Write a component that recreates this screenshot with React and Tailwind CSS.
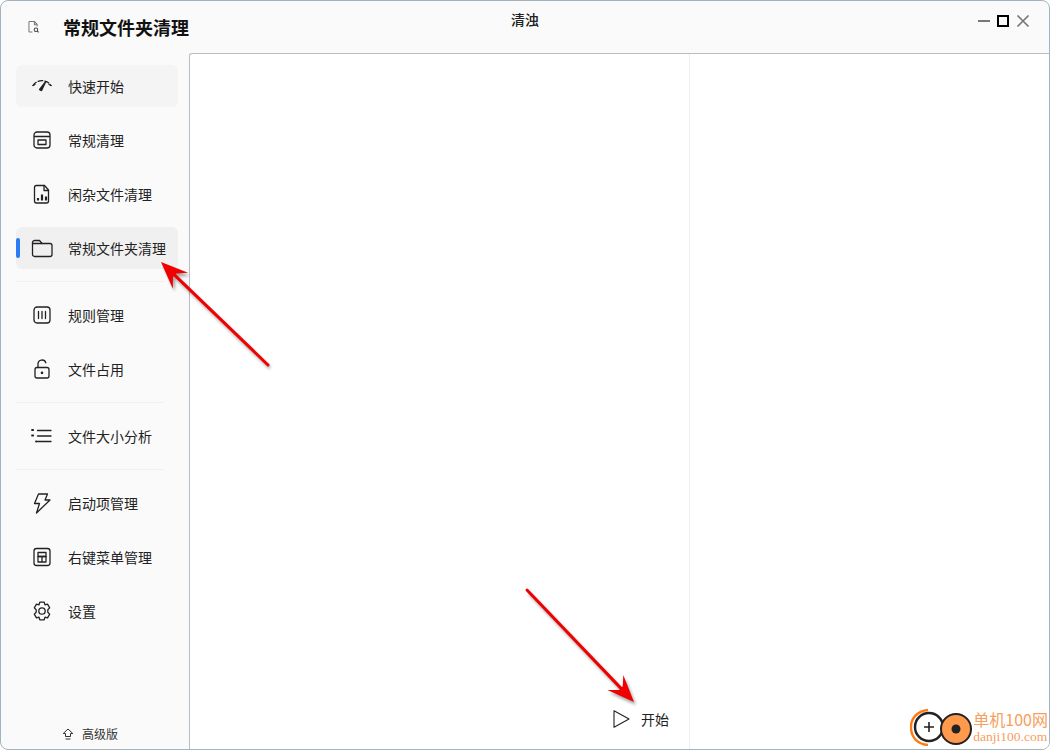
const Ico = ({ children, className = 'w-6 h-6' }) => (
  <svg className={className} viewBox="0 0 24 24" fill="none" stroke="#222" strokeWidth={1.3} strokeLinecap="round" strokeLinejoin="round">
    {children}
  </svg>
);

const icons = {
  gauge: (
    <Ico>
      <path d="M3 11.5C5 8.5 8 6.8 12 6.6c4 .2 7 1.9 9 4.9" strokeDasharray="4.5 2.2" />
      <path d="M3 11.5l2-1M21 11.5l-2-1" />
      <path d="M15.5 8l-4 8.5-1.8-1z" fill="#222" strokeWidth={1.5} />
    </Ico>
  ),
  normal: (
    <Ico>
      <rect x="4" y="4" width="16" height="16" rx="3" />
      <path d="M4.5 8.5h15" />
      <rect x="8" y="12" width="8" height="4.5" />
    </Ico>
  ),
  file: (
    <Ico>
      <path d="M6.5 3.5h8l4 4.5v11a2 2 0 0 1-2 2h-10a2 2 0 0 1-2-2v-13.500a2 2 0 0 1 2-2z" />
      <path d="M14 3.500v5h4.500" />
      <path d="M8 18.500v-2.500M12 18.500v-6M16 18.500v-4" strokeWidth={2.2} strokeLinecap="butt" />
    </Ico>
  ),
  folder: (
    <Ico>
      <path d="M2.500 6.500a2 2 0 0 1 2-2h5l2.500 3h8a2 2 0 0 1 2 2v9a2 2 0 0 1-2 2h-15.500a2 2 0 0 1-2-2z" />
      <path d="M12 7.500h-9.500" />
    </Ico>
  ),
  rule: (
    <Ico>
      <rect x="4" y="4" width="16" height="16" rx="3" />
      <path d="M8.500 8.500v7M12 8.500v7M15.500 8.500v7" />
    </Ico>
  ),
  lock: (
    <Ico>
      <rect x="5" y="10.500" width="14" height="10.500" rx="2" />
      <path d="M8 10.500V7a4 4 0 0 1 7.800-1.200" />
      <circle cx="12" cy="15.800" r="0.700" fill="#222" />
    </Ico>
  ),
  list: (
    <Ico>
      <path d="M7.500 6.500h13.500M7.500 12h13.500M7.500 17.500h13.500" />
      <path d="M2 6h1.200M2 11.500h1.200M6 17.500h.4" strokeWidth={1.8} />
    </Ico>
  ),
  bolt: (
    <Ico>
      <path d="M8.500 3h9l-2.500 6h5l-13.500 13 3-9.500h-5z" />
    </Ico>
  ),
  menu: (
    <Ico>
      <rect x="4" y="3.500" width="16" height="17" rx="2.500" />
      <rect x="8" y="7.500" width="8" height="4" />
      <path d="M8 11.500h8v5.500h-8zM12 11.500v5.500" />
    </Ico>
  ),
  gear: (
    <Ico>
      <path d="M9.800 3.200h4.400l.8 2.600 2.500-.7 2.200 3.800-1.900 1.900 0 2.400 1.900 1.900-2.200 3.800-2.500-.7-.8 2.600h-4.400l-.8-2.600-2.500.7-2.200-3.800 1.900-1.900v-2.400l-1.900-1.900 2.200-3.800 2.500.7z" />
      <circle cx="12" cy="12" r="3.200" />
    </Ico>
  ),
};

const NavItem = ({ icon, label, hover, active }) => (
  <div className={`relative h-[42px] w-[162px] flex items-center rounded-md pl-[14px] ${active ? 'bg-[#f0f0f0]' : hover ? 'bg-[#f4f4f4]' : ''}`}>
    {active && <div className="absolute left-0 top-[11px] w-1 h-5 rounded bg-[#2f7bf6]" />}
    {icons[icon]}
    <span className="ml-[14px] text-[14px] text-[#222] leading-none whitespace-nowrap">{label}</span>
  </div>
);

const Divider = () => <div className="w-[148px] h-px bg-[#f0f0f0]" />;

const Arrow = ({ x1, y1, x2, y2 }) => {
  // shaft plus arrow head along the line from (x1,y1) to (x2,y2)
  const len = Math.hypot(x2 - x1, y2 - y1);
  const ux = (x2 - x1) / len;
  const uy = (y2 - y1) / len;
  const pt = (along, side) => `${x2 - ux * along - uy * side},${y2 - uy * along + ux * side}`;
  const head = [pt(0, 0), pt(27, -11), pt(19, -2.500), pt(19, 2.500), pt(27, 11)].join(' ');
  return (
    <g>
      <g transform="translate(2 3)" opacity="0.35" filter="url(#blur)">
        <line x1={x1} y1={y1} x2={x2 - ux * 15} y2={y2 - uy * 15} stroke="#000" strokeWidth="3" />
        <polygon points={head} fill="#000" />
      </g>
      <line x1={x1} y1={y1} x2={x2 - ux * 15} y2={y2 - uy * 15} stroke="#f00000" strokeWidth="3" strokeLinecap="round" />
      <polygon points={head} fill="#f00000" />
    </g>
  );
};

export default function App() {
  return (
    <div className="relative w-[1050px] h-[750px] bg-white overflow-hidden" style={{ fontFamily: '"Noto Sans CJK SC", "Noto Sans", sans-serif' }}>
      <div className="w-full h-full flex flex-col bg-[#fafafa] border border-[#a3b4c1] rounded-lg overflow-hidden">
        {/* Title bar */}
        <div className="h-[52px] flex shrink-0 relative">
          <div className="w-[188px] flex items-center pl-[26px]">
            <svg className="w-[18px] h-[18px]" viewBox="0 0 18 18" fill="none" stroke="#777" strokeWidth={1.3}>
              <path d="M7 15.500H3.500a1 1 0 0 1-1-1V3a1 1 0 0 1 1-1h6l3.500 3.500v3" />
              <path d="M9.500 2v4H13" />
              <circle cx="11.500" cy="12.500" r="2.300" stroke="#444" />
              <path d="M13.300 14.300l1.700 1.700" stroke="#444" />
            </svg>
            <span className="ml-[22px] text-[18px] font-bold text-[#111] leading-none whitespace-nowrap">常规文件夹清理</span>
          </div>
          <div className="flex-1 flex justify-center pt-[11px] pr-[188px]">
            <span className="text-[14px] font-medium text-[#222] leading-[14px] ml-[188px] -translate-x-[94px]">清浊</span>
          </div>
          <div className="absolute right-[19px] top-[13px] flex items-center gap-[7px]">
            <div className="w-3 h-[2px] bg-[#777]" />
            <div className="w-3 h-3 border-2 border-black bg-[#fafafa]" />
            <svg className="w-[14px] h-[14px]" viewBox="0 0 14 14" stroke="#777" strokeWidth={1.700}>
              <path d="M1.500 1.500l11 11M12.500 1.500l-11 11" />
            </svg>
          </div>
        </div>

        <div className="flex-1 flex min-h-0">
          {/* Sidebar */}
          <div className="w-[188px] shrink-0 flex flex-col pl-[15px] pt-3 pb-[7px]">
            <div className="flex flex-col gap-3">
              <NavItem icon="gauge" label="快速开始" hover />
              <NavItem icon="normal" label="常规清理" />
              <NavItem icon="file" label="闲杂文件清理" />
              <NavItem icon="folder" label="常规文件夹清理" active />
              <Divider />
              <NavItem icon="rule" label="规则管理" />
              <NavItem icon="lock" label="文件占用" />
              <Divider />
              <NavItem icon="list" label="文件大小分析" />
              <Divider />
              <NavItem icon="bolt" label="启动项管理" />
              <NavItem icon="menu" label="右键菜单管理" />
              <NavItem icon="gear" label="设置" />
            </div>
            <div className="mt-auto flex items-center pl-[46px] h-4">
              <svg className="w-3 h-3" viewBox="0 0 12 12" fill="none" stroke="#333" strokeWidth={1}>
                <path d="M6 1L1.200 5.500h2.300v3h5v-3h2.300zM3.500 11h5" />
              </svg>
              <span className="ml-2 text-[12px] text-[#333] leading-none">高级版</span>
            </div>
          </div>

          {/* Content */}
          <div className="flex-1 flex bg-white border-l border-t border-[#b3bec6] rounded-tl-[3px]">
            <div className="w-[500px] border-r border-[#eeeeee] relative flex items-end justify-end">
              <div className="flex items-center mb-[20px] mr-[20px]">
                <svg className="w-[20px] h-[20px]" viewBox="0 0 20 20" fill="none" stroke="#222" strokeWidth={1.100} strokeLinejoin="round">
                  <path d="M3 1.800l15 8.200-15 8.200z" />
                </svg>
                <span className="ml-[10px] text-[14px] text-[#222] leading-none">开始</span>
              </div>
            </div>
            <div className="flex-1" />
          </div>
        </div>
      </div>

      {/* Annotation arrows */}
      <svg className="absolute inset-0 pointer-events-none" width="1050" height="750">
        <defs>
          <filter id="blur"><feGaussianBlur stdDeviation="1.500" /></filter>
        </defs>
        <Arrow x1={268} y1={365} x2={161} y2={262} />
        <Arrow x1={527} y1={590} x2={634} y2={702} />
      </svg>

      {/* Watermark */}
      <div className="absolute right-[2px] bottom-[1px] flex items-center bg-white/0">
        <svg className="w-[64px] h-[44px]" viewBox="0 0 64 44" fill="none">
          <path d="M18 5C7 6 0 14 1 24c1 9 7 15 17 16" stroke="#ff7a14" strokeWidth="2.500" />
          <circle cx="19" cy="22" r="14" stroke="#222" strokeWidth="2.500" fill="#fff" />
          <path d="M14 22h10M19 17v10" stroke="#222" strokeWidth="1.600" />
          <circle cx="46" cy="24" r="15" fill="#ff9a4d" stroke="#222" strokeWidth="2" />
          <circle cx="46" cy="24" r="4.500" fill="#222" />
        </svg>
        <div className="flex flex-col items-start -ml-[1px]" style={{ fontFamily: '"Liberation Serif", "Noto Sans CJK SC", serif' }}>
          <span className="text-[16px] leading-[19px] text-[#f6a05c]" style={{ fontFamily: '"Noto Sans CJK SC", sans-serif' }}>单机100网</span>
          <span className="text-[13.500px] leading-[15px] text-[#f6a05c]">danji100.com</span>
        </div>
      </div>
    </div>
  );
}
